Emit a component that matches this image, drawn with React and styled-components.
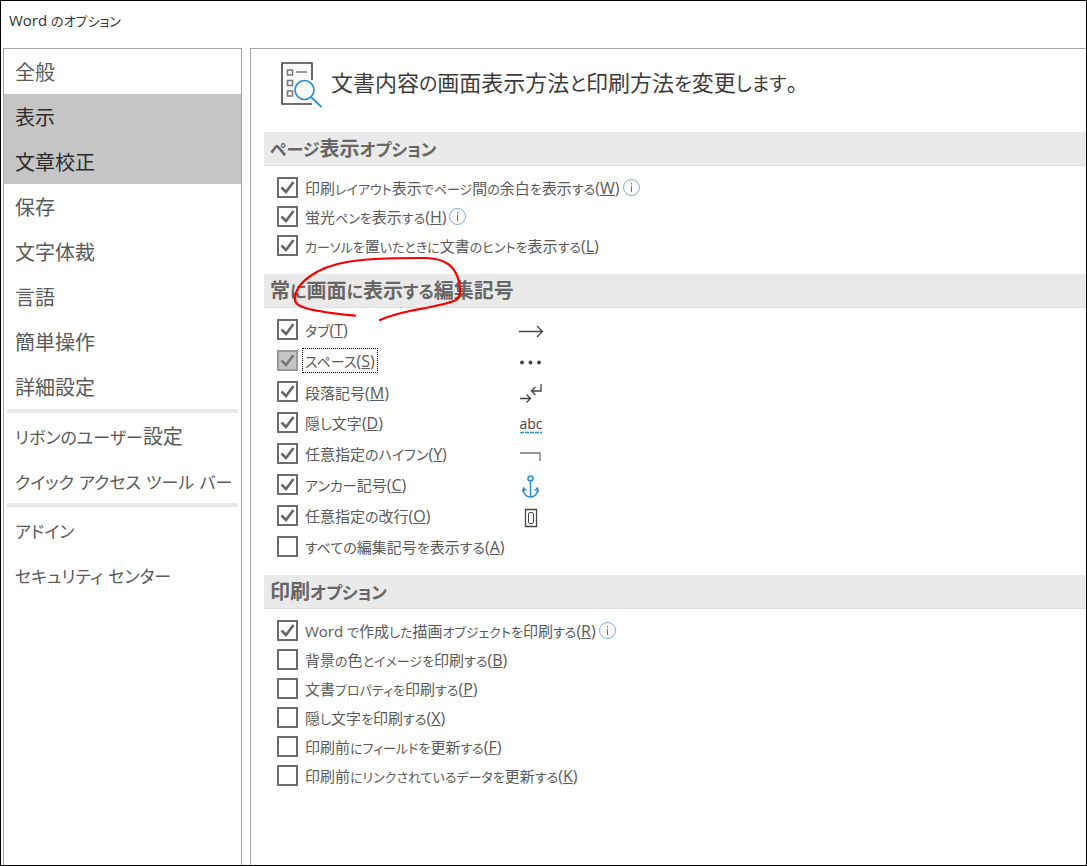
import React, { useState } from "react";
import styled, { createGlobalStyle } from "styled-components";

const GlobalStyle = createGlobalStyle`
  * {
    box-sizing: border-box;
  }
  body {
    margin: 0;
    background: #fff;
    color: #5a5a5a;
    font-family: "Open Sans", "Noto Sans CJK JP", sans-serif;
    font-weight: 400;
    font-feature-settings: "palt";
  }
`;

const Kana = styled.span`
  font-size: ${props => props.$size}px;
`;

const Dialog = styled.div`
  display: flex;
  flex-direction: column;
  height: 100vh;
  border: 1px solid #000;
  overflow: hidden;
`;

const TitleBar = styled.header`
  flex: none;
  height: 47px;
  padding: 0 8px;
  color: #333;
  font-size: 15px;
  line-height: 38px;
`;

const Panels = styled.div`
  flex: 1;
  display: flex;
  gap: 8px;
  min-height: 0;
  padding-left: 2px;
`;

const Sidebar = styled.nav`
  flex: none;
  width: 239px;
  border: 1px solid #a6a6a6;
  border-bottom: 0;
`;

const NavItem = styled.button`
  display: block;
  width: 100%;
  height: 45px;
  padding: 2px 11px 0;
  border: 0;
  background: ${props => (props.$selected ? "#c5c5c5" : "transparent")};
  color: ${props => (props.$selected ? "#2b2b2b" : "#5a5a5a")};
  font: inherit;
  font-size: 20px;
  font-feature-settings: inherit;
  line-height: 43px;
  text-align: left;
  white-space: nowrap;
`;

const Separator = styled.hr`
  height: 4px;
  margin: 0 3px;
  border: 0;
  background: #e9e9e9;
`;

const Main = styled.main`
  flex: 1;
  min-width: 0;
  padding-left: 13px;
  border: 1px solid #a6a6a6;
  border-width: 1px 0 0 1px;
  overflow: hidden;
`;

const PageHeader = styled.div`
  display: flex;
  align-items: center;
  gap: 8px;
  height: 83px;
  padding: 0 17px 11px;
`;

const PageTitle = styled.h1`
  margin: 0;
  padding-bottom: 4px;
  color: #3c3c3c;
  font-size: 22px;
  font-weight: 400;
  line-height: 32px;
`;

const SectionTitle = styled.h2`
  height: 34px;
  margin: 0;
  padding: 0 6px;
  border-bottom: 1px solid #dfdfdf;
  background: #eaeaea;
  color: #666;
  font-size: 20px;
  font-weight: 700;
  line-height: 34px;
`;

const Options = styled.div`
  padding: ${props => (props.$spaced ? "6px 13px 13px" : "7px 13px 14px")};
`;

const OptionRow = styled.div`
  display: grid;
  grid-template-columns: ${props => (props.$spaced ? "241px auto" : "auto")};
  align-items: center;
  justify-content: start;
  height: ${props => (props.$spaced ? "31px" : "29px")};
`;

const OptionCell = styled.div`
  display: flex;
  align-items: center;
  white-space: nowrap;
`;

const CheckBox = styled.span`
  display: grid;
  flex: none;
  margin-right: 5px;

  & > * {
    grid-area: 1 / 1;
  }
  & svg {
    pointer-events: none;
  }
`;

const CheckInput = styled.input`
  width: 21px;
  height: 21px;
  margin: 0;
  border: 2px solid ${props => (props.$active ? "#999" : "#6c6c6c")};
  background: ${props => (props.$active ? "#c5c5c5" : "#fff")};
  appearance: none;
`;

const OptionLabel = styled.label`
  padding: 2px 2px 0;
  outline: ${props => (props.$active ? "1px dotted #000" : "none")};
  font-size: 15px;
  line-height: 20px;
`;

const AccessKey = styled.span`
  font-size: 16px;
`;

const InfoButton = styled.button`
  display: flex;
  padding: 0;
  border: 0;
  background: transparent;
`;

const RedMark = styled.svg`
  position: absolute;
  top: -20px;
  left: 26px;
  pointer-events: none;
`;

const Marked = styled.div`
  position: relative;
`;

const InfoIcon = () => (
  <svg width="19" height="19" viewBox="0 0 19 19" fill="none" stroke="#86a6d4">
    <circle cx="9.5" cy="9.5" r="8" />
    <path d="M9.5 8v6M9.5 5v1.5" stroke="#4472b8" />
  </svg>
);

const PageIcon = () => (
  <svg width="42" height="46" viewBox="0 0 42 46" fill="none">
    <path d="M31 18V1H1V42H31" fill="#fafafa" stroke="#444" strokeWidth="1.6" />
    <path d="M6.500 8h5v5h-5zM6.500 18.500h5v5h-5zM6.500 29h5v5h-5z" stroke="#777" strokeWidth="1.500" />
    <path d="M15 10h11" stroke="#777" strokeWidth="1.500" />
    <circle cx="23.500" cy="28" r="9.500" fill="#fafafa" stroke="#2b8fd3" strokeWidth="1.700" />
    <path d="M30 35l10.500 10" stroke="#2b8fd3" strokeWidth="1.800" />
  </svg>
);

const Glyph = ({ children }) => (
  <svg width="26" height="26" viewBox="0 0 26 26" fill="none" stroke="#444" strokeWidth="1.300">
    {children}
  </svg>
);

const glyphs = {
  tab: (
    <Glyph>
      <path d="M1 14.500h23M19 9l5.500 5.500L19 20" />
    </Glyph>
  ),
  space: (
    <Glyph>
      <g fill="#444" stroke="none">
        <circle cx="4" cy="14.500" r="1.900" />
        <circle cx="12.500" cy="14.500" r="1.900" />
        <circle cx="21" cy="14.500" r="1.900" />
      </g>
    </Glyph>
  ),
  paragraph: (
    <Glyph>
      <path d="M2 19.500h10M8.500 15.500l4 4-4 4" />
      <path d="M23 5v7h-9M17.500 8l-4 4 4 4" />
    </Glyph>
  ),
  hidden: (
    <Glyph>
      <text x="1.500" y="19" fill="#444" stroke="none" fontSize="14" fontFamily="Open Sans, sans-serif">
        abc
      </text>
      <path d="M2 22.500h22" stroke="#2b8fd3" strokeWidth="1.300" strokeDasharray="4 1" />
    </Glyph>
  ),
  hyphen: (
    <Glyph>
      <path d="M2 12h20v8" stroke="#777" />
    </Glyph>
  ),
  anchor: (
    <Glyph>
      <g stroke="#2b8fd3" strokeWidth="1.500">
        <circle cx="12.500" cy="6.500" r="2.500" />
        <path d="M12.500 9v16M5.500 17c0 5 3 8 7 8s7-3 7-8" />
        <path d="M4.500 20l1-4 3 2.500M20.500 20l-1-4-3 2.500" strokeWidth="1.300" />
      </g>
    </Glyph>
  ),
  lineBreak: (
    <Glyph>
      <path d="M7.500 6.500h11v17h-11z" />
      <rect x="10.500" y="9.500" width="5" height="11" rx="1.500" strokeWidth="1" />
    </Glyph>
  )
};

const navGroups = [
  ["全般", "表示", "文章校正", "保存", "文字体裁", "言語", "簡単操作", "詳細設定"],
  ["リボンのユーザー設定", "クイック アクセス ツール バー"],
  ["アドイン", "セキュリティ センター"]
];
const selectedItems = ["表示", "文章校正"];

const pageOptions = [
  { text: "印刷レイアウト表示でページ間の余白を表示する", accessKey: "W", checked: true, info: true },
  { text: "蛍光ペンを表示する", accessKey: "H", checked: true, info: true },
  { text: "カーソルを置いたときに文書のヒントを表示する", accessKey: "L", checked: true }
];

const markOptions = [
  { text: "タブ", accessKey: "T", checked: true, glyph: "tab" },
  { text: "スペース", accessKey: "S", checked: true, glyph: "space", active: true },
  { text: "段落記号", accessKey: "M", checked: true, glyph: "paragraph" },
  { text: "隠し文字", accessKey: "D", checked: true, glyph: "hidden" },
  { text: "任意指定のハイフン", accessKey: "Y", checked: true, glyph: "hyphen" },
  { text: "アンカー記号", accessKey: "C", checked: true, glyph: "anchor" },
  { text: "任意指定の改行", accessKey: "O", checked: true, glyph: "lineBreak" },
  { text: "すべての編集記号を表示する", accessKey: "A" }
];

const printOptions = [
  { text: "Word で作成した描画オブジェクトを印刷する", accessKey: "R", checked: true, info: true },
  { text: "背景の色とイメージを印刷する", accessKey: "B" },
  { text: "文書プロパティを印刷する", accessKey: "P" },
  { text: "隠し文字を印刷する", accessKey: "X" },
  { text: "印刷前にフィールドを更新する", accessKey: "F" },
  { text: "印刷前にリンクされているデータを更新する", accessKey: "K" }
];

// UI text sets its kana a little smaller than the kanji around it
const UiText = ({ text, kana }) =>
  text.split(/([\u3040-\u30ff]+)/).map((part, index) =>
    index % 2 ? (
      <Kana key={index} $size={kana}>
        {part}
      </Kana>
    ) : (
      part
    )
  );

const Option = ({ option, spaced }) => {
  const [checked, setChecked] = useState(!!option.checked);
  const id = `option-${option.accessKey}`;

  return (
    <OptionRow $spaced={spaced}>
      <OptionCell>
        <CheckBox>
          <CheckInput
            id={id}
            type="checkbox"
            checked={checked}
            onChange={e => setChecked(e.target.checked)}
            $active={option.active}
          />
          {checked && (
            <svg width="21" height="21" viewBox="0 0 21 21" fill="none">
              <path
                d="M4.500 10.500l4.500 4.500L16.500 5"
                stroke={option.active ? "#777" : "#666"}
                strokeWidth="2.600"
              />
            </svg>
          )}
        </CheckBox>
        <OptionLabel htmlFor={id} $active={option.active}>
          <UiText text={option.text} kana={spaced ? 14 : 13} />
          <AccessKey>
            (<u>{option.accessKey}</u>)
          </AccessKey>
        </OptionLabel>
        {option.info && (
          <InfoButton type="button" aria-label="情報">
            <InfoIcon />
          </InfoButton>
        )}
      </OptionCell>
      {option.glyph && glyphs[option.glyph]}
    </OptionRow>
  );
};

const OptionList = ({ options, spaced }) => (
  <Options $spaced={spaced}>
    {options.map(option => (
      <Option key={option.accessKey} option={option} spaced={spaced} />
    ))}
  </Options>
);

const App = () => (
  <>
    <GlobalStyle />
    <Dialog>
      <TitleBar>
        <UiText text="Word のオプション" kana={13} />
      </TitleBar>
      <Panels>
        <Sidebar>
          {navGroups.map((items, index) => (
            <React.Fragment key={items[0]}>
              {index > 0 && <Separator />}
              {items.map(item => (
                <NavItem key={item} type="button" $selected={selectedItems.includes(item)}>
                  <UiText text={item} kana={17} />
                </NavItem>
              ))}
            </React.Fragment>
          ))}
        </Sidebar>
        <Main>
          <PageHeader>
            <PageIcon />
            <PageTitle>
              <UiText text="文書内容の画面表示方法と印刷方法を変更します。" kana={19} />
            </PageTitle>
          </PageHeader>
          <SectionTitle>
            <UiText text="ページ表示オプション" kana={17} />
          </SectionTitle>
          <OptionList options={pageOptions} />
          <Marked>
            <SectionTitle>
              <UiText text="常に画面に表示する編集記号" kana={17} />
            </SectionTitle>
            <RedMark width="176" height="72" viewBox="290 254 176 72" fill="none">
              <path
                d="M355 315.700C338 314 320 312 307 308.500C299 306 295 304 295 299C295 283 317 267 347 262C372 257.500 402 258 427 258C447 259 454 267 458 278C461 288 462 297 455 300.500C444 305 425 308 410 311C398 313.500 389 316 380 320"
                stroke="#f80000"
                strokeWidth="2.200"
                strokeLinecap="round"
              />
            </RedMark>
          </Marked>
          <OptionList options={markOptions} spaced />
          <SectionTitle>
            <UiText text="印刷オプション" kana={17} />
          </SectionTitle>
          <OptionList options={printOptions} />
        </Main>
      </Panels>
    </Dialog>
  </>
);

export default App;
